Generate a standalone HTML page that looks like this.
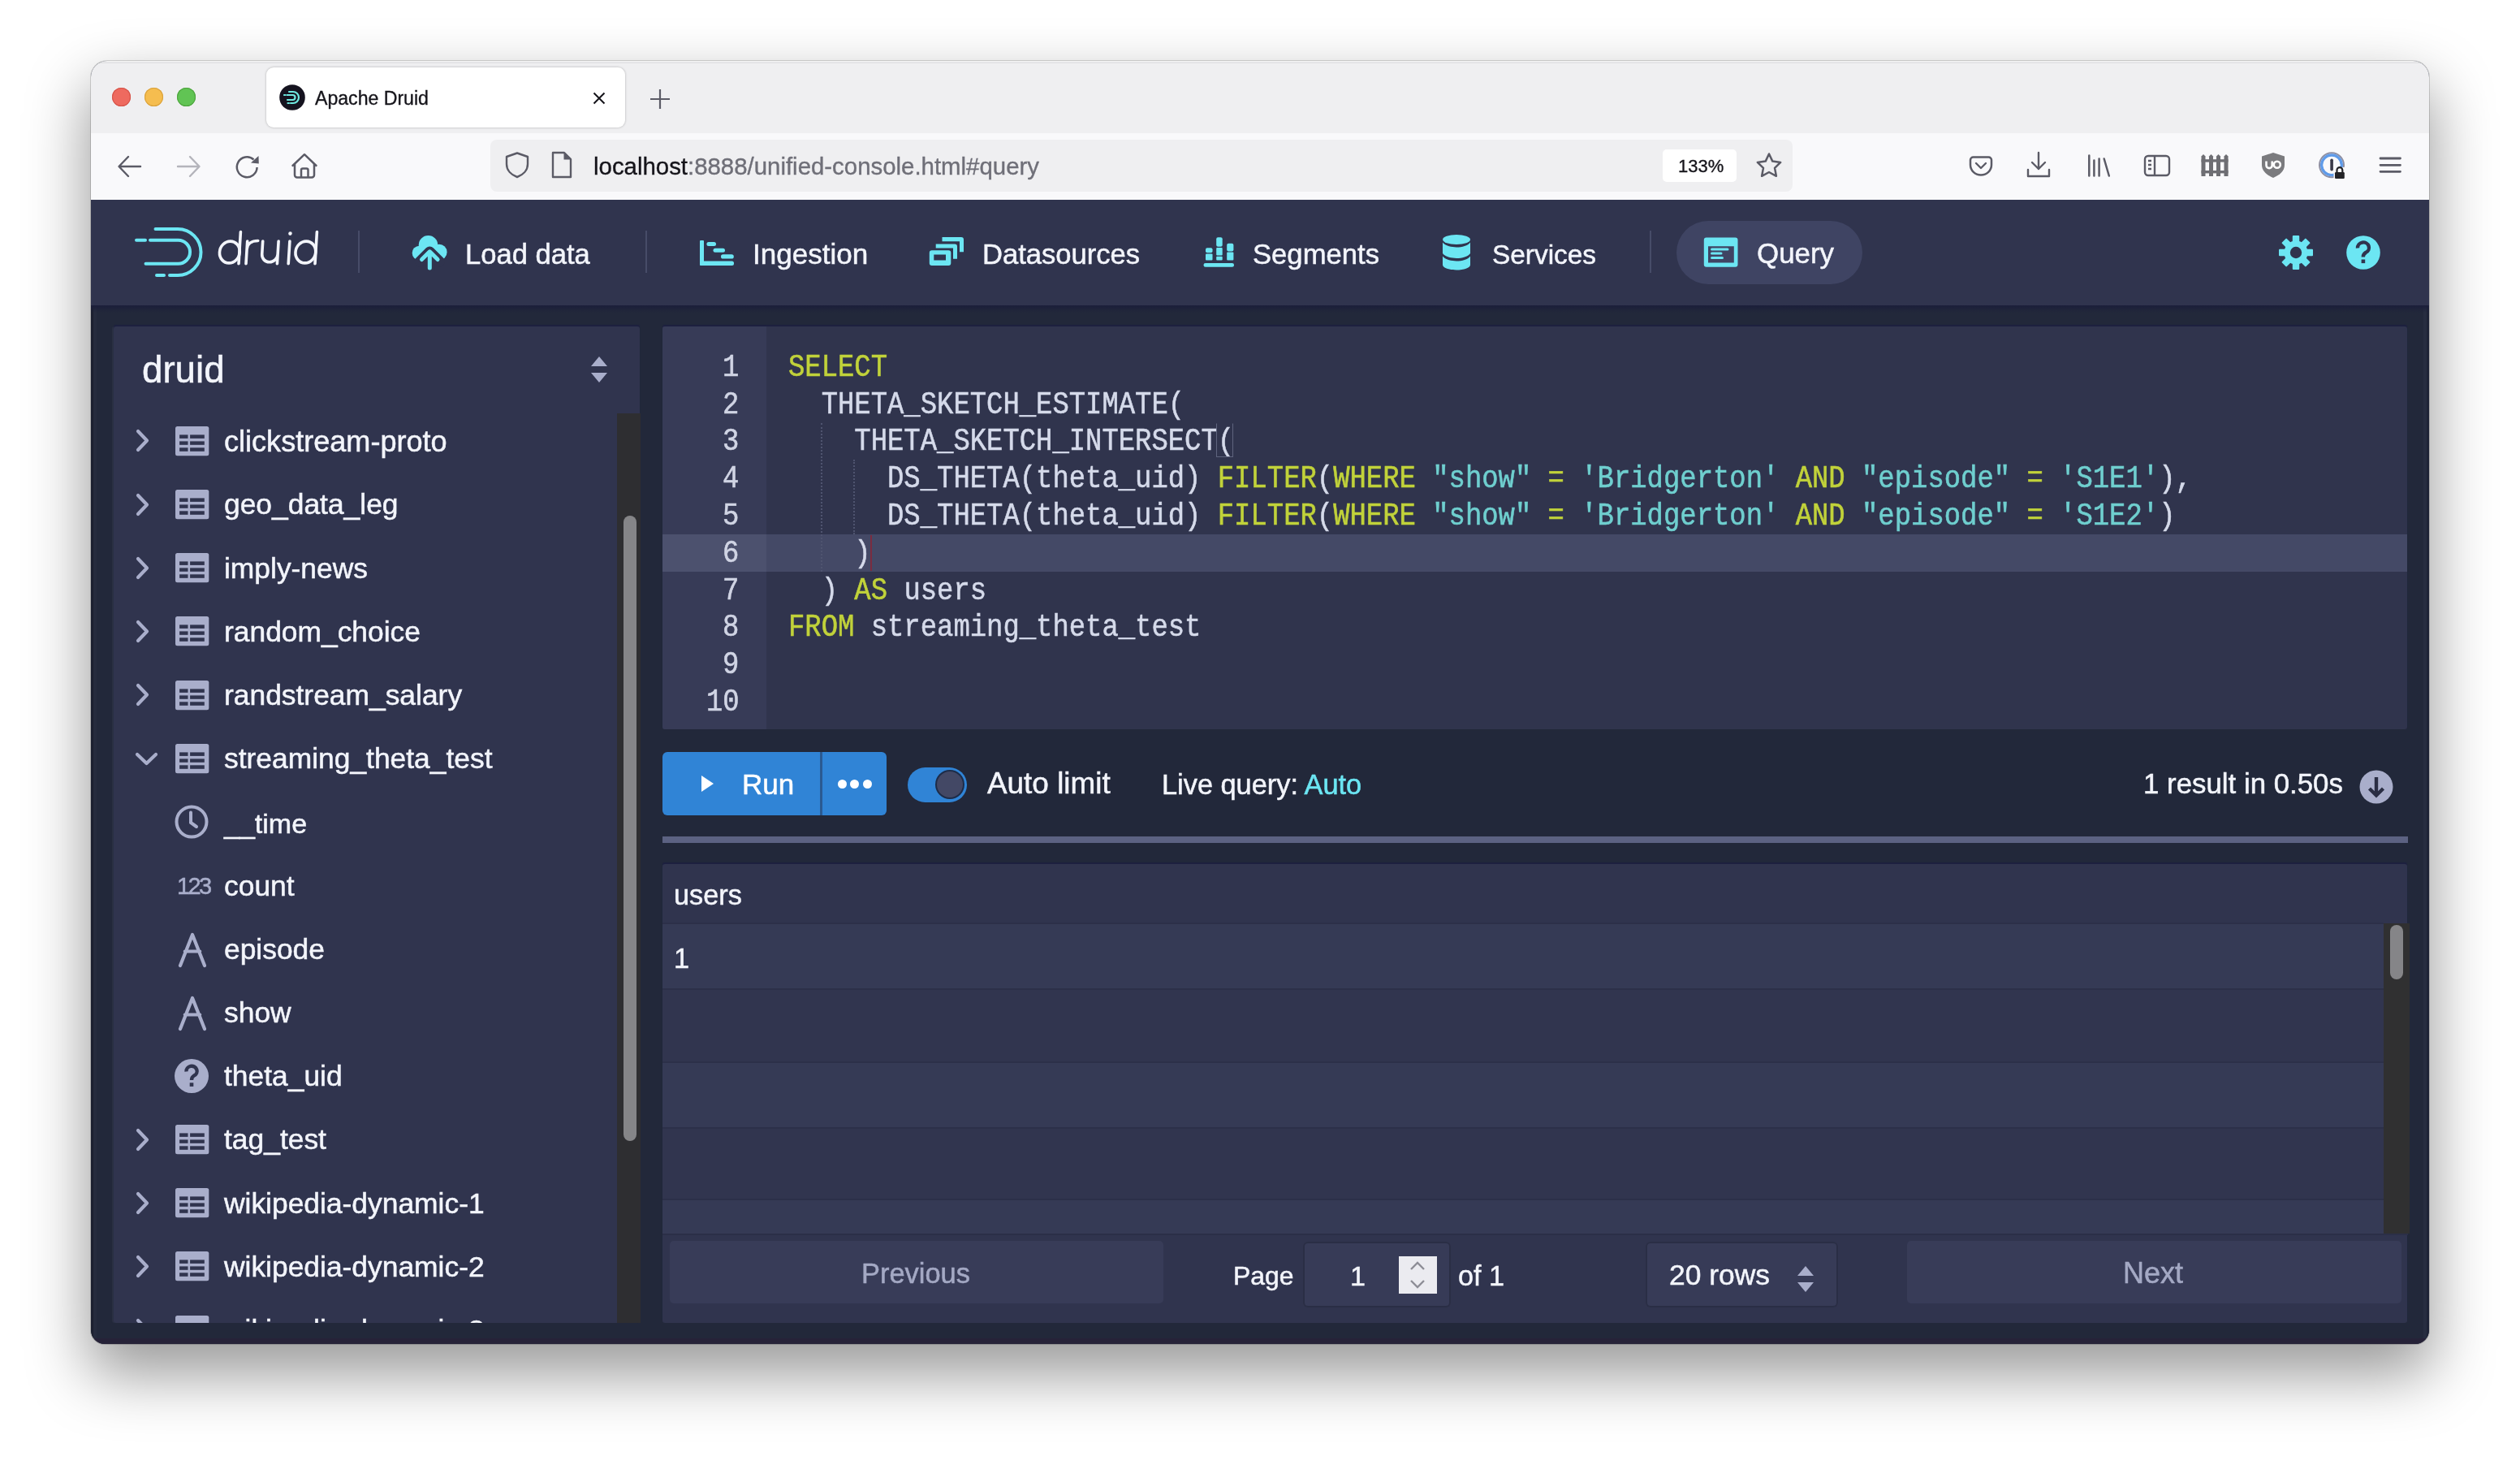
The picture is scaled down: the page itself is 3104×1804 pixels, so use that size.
<!DOCTYPE html>
<html><head><meta charset="utf-8"><style>
html,body{margin:0;padding:0;}
body{width:3104px;height:1804px;position:relative;overflow:hidden;background:#ffffff;font-family:'Liberation Sans', sans-serif;}
.t{position:absolute;white-space:pre;-webkit-text-stroke:0.5px currentColor;will-change:transform;}
.r{position:absolute;}
</style></head><body>
<div class="r" style="left:112px;top:75px;width:2880px;height:1580px;border-radius:20px 20px 17px 17px;box-shadow:0 34px 76px 4px rgba(0,0,0,0.40), 0 0 0 1px rgba(0,0,0,0.15);background:#22283a;"></div><div class="r" style="left:112px;top:75px;width:2880px;height:1580px;border-radius:20px;overflow:hidden;"><div class="r" style="left:0;top:0;width:2880px;height:89px;background:#efeff1;box-shadow:inset 0 1.5px 0 rgba(255,255,255,0.6), inset 0 4px 0 -1px rgba(0,0,0,0.06)"></div><div class="r" style="left:0;top:89px;width:2880px;height:82px;background:#f9f9fb"></div></div><div class="r" style="left:0;top:0;width:3104px;height:1804px;clip-path:inset(75px 112px 149px 112px round 20px 20px 17px 17px)"><div class="r" style="left:112px;top:1648px;width:2880px;height:7px;background:#262238;"></div><div class="r" style="left:112px;top:376px;width:3px;height:1272px;background:#1c2030;"></div><div class="r" style="left:115px;top:376px;width:4px;height:1272px;background:#262b3d;"></div><div class="r" style="left:2985px;top:376px;width:4px;height:1272px;background:#272d40;"></div><div class="r" style="left:2989px;top:376px;width:3px;height:1272px;background:#1e2336;"></div><div class="r" style="left:138.0px;top:108.3px;width:23px;height:23px;border-radius:50%;background:#ee6a5f;box-shadow:inset 0 0 0 1px #d5544a"></div><div class="r" style="left:178.3px;top:108.3px;width:23px;height:23px;border-radius:50%;background:#f5bd4f;box-shadow:inset 0 0 0 1px #d9a13c"></div><div class="r" style="left:218.1px;top:108.3px;width:23px;height:23px;border-radius:50%;background:#61c454;box-shadow:inset 0 0 0 1px #4ea43f"></div><div class="r" style="left:328px;top:83px;width:442px;height:74px;border-radius:9px;background:#ffffff;box-shadow:0 0 3px rgba(0,0,0,0.28)"></div><svg class="r" style="left:344px;top:104px" width="32" height="32" viewBox="0 0 32 32"><circle cx="16" cy="16" r="15.8" fill="#15131f"/><g fill="none" stroke="#6ee8e0" stroke-width="2.2" stroke-linecap="round"><path d="M12 9 H17 A7 7 0 0 1 17 23 H14"/><path d="M9.5 13 H16.5 A3 3 0 0 1 16.5 19 H10"/><path d="M6 13 H7.5"/><path d="M10.5 23 H12"/></g></svg><div class="t" style="left:388.0px;top:110.4px;font-size:23.1px;line-height:23.1px;color:#15141a;font-family:'Liberation Sans', sans-serif;-webkit-text-stroke:0.35px currentColor;">Apache Druid</div><svg class="r" style="left:730px;top:113px" width="16" height="16" viewBox="0 0 16 16"><path d="M1.5 1.5 L14.5 14.5 M14.5 1.5 L1.5 14.5" stroke="#15141a" stroke-width="2" fill="none"/></svg><svg class="r" style="left:800px;top:109px" width="26" height="26" viewBox="0 0 26 26"><path d="M13 1 V25 M1 13 H25" stroke="#5b5b66" stroke-width="2.2" fill="none"/></svg><svg class="r" style="left:144px;top:190px" width="32" height="30" viewBox="0 0 32 30"><path d="M29 15 H3 M14 3 L2.5 15 L14 27" stroke="#5b5b66" stroke-width="2.4" fill="none" stroke-linejoin="round" stroke-linecap="round"/></svg><svg class="r" style="left:216px;top:190px" width="32" height="30" viewBox="0 0 32 30"><path d="M3 15 H29 M18 3 L29.5 15 L18 27" stroke="#b4b4bb" stroke-width="2.4" fill="none" stroke-linejoin="round" stroke-linecap="round"/></svg><svg class="r" style="left:288px;top:188px" width="34" height="34" viewBox="0 0 34 34"><path d="M28.6 18 A12.4 12.4 0 1 1 24.5 8.5" stroke="#5b5b66" stroke-width="2.5" fill="none"/><path d="M30.5 4 L21 12.5 L30.8 13.5 Z" fill="#5b5b66"/></svg><svg class="r" style="left:358px;top:188px" width="34" height="34" viewBox="0 0 34 34"><path d="M2.5 16 L17 2.2 L31.5 16" stroke="#5b5b66" stroke-width="2.5" fill="none" stroke-linejoin="round" stroke-linecap="round"/><path d="M5 14 V27.5 A3 3 0 0 0 8 30.5 H26 A3 3 0 0 0 29 27.5 V14" stroke="#5b5b66" stroke-width="2.5" fill="none"/><path d="M13 30.5 V21.5 A2 2 0 0 1 15 19.5 H19.5 A2 2 0 0 1 21.5 21.5 V30.5" stroke="#5b5b66" stroke-width="2.5" fill="none"/></svg><div class="r" style="left:604px;top:172px;width:1604px;height:64px;border-radius:8px;background:#efeff1"></div><svg class="r" style="left:620px;top:186px" width="34" height="34" viewBox="0 0 34 34"><path d="M17 2.5 L30 7 V16 C30 24 24 29.5 17 32 C10 29.5 4 24 4 16 V7 Z" stroke="#5b5b66" stroke-width="2.4" fill="none" stroke-linejoin="round"/></svg><svg class="r" style="left:678px;top:186px" width="28" height="34" viewBox="0 0 28 34"><path d="M3 2 H17 L25 10 V32 H3 Z" stroke="#5b5b66" stroke-width="2.4" fill="none" stroke-linejoin="round"/><path d="M16.5 2 V10.5 H25 Z" fill="#5b5b66"/></svg><div class="t" style="left:731.0px;top:189.8px;font-size:29.4px;line-height:29.4px;color:#15141a;font-family:'Liberation Sans', sans-serif;-webkit-text-stroke:0.35px currentColor;">localhost<span style="color:#6f6f78">:8888/unified-console.html#query</span></div><div class="r" style="left:2048px;top:184px;width:91px;height:40px;border-radius:5px;background:#ffffff"></div><div class="t" style="left:2067.0px;top:194.3px;font-size:22px;line-height:22px;color:#15141a;font-family:'Liberation Sans', sans-serif;-webkit-text-stroke:0.35px currentColor;">133%</div><svg class="r" style="left:2160px;top:186px" width="38" height="38" viewBox="0 0 38 38"><path d="M19 3.5 L23.3 12.6 L33.2 13.9 L26 20.8 L27.9 30.8 L19 26 L10.1 30.8 L12 20.8 L4.8 13.9 L14.7 12.6 Z" stroke="#5b5b66" stroke-width="2.5" fill="none" stroke-linejoin="round"/></svg><svg class="r" style="left:2424px;top:188px" width="32" height="32" viewBox="0 0 32 32"><path d="M7 5.5 H25.5 A3.5 3.5 0 0 1 29 9 V15 A13 12.5 0 0 1 3 15 V9 A3.5 3.5 0 0 1 6.5 5.5 Z" stroke="#5b5b66" stroke-width="2.5" fill="none" stroke-linejoin="round"/><path d="M10 13 L16 19 L22 13" stroke="#5b5b66" stroke-width="2.4" fill="none" stroke-linecap="round" stroke-linejoin="round"/></svg><svg class="r" style="left:2495px;top:186px" width="32" height="34" viewBox="0 0 32 34"><path d="M16 2 V22 M8 14 L16 22 L24 14 M3 23 V31 H29 V23" stroke="#5b5b66" stroke-width="2.4" fill="none" stroke-linejoin="round" stroke-linecap="round"/></svg><svg class="r" style="left:2568px;top:188px" width="34" height="32" viewBox="0 0 34 32"><path d="M5.3 3.5 V28.5 M11.4 9.5 V28.5 M17.6 7.5 V28.5 M23.7 7.5 L29.8 28.5" stroke="#5b5b66" stroke-width="2.5" fill="none" stroke-linecap="round"/></svg><svg class="r" style="left:2640px;top:188px" width="34" height="32" viewBox="0 0 34 32"><rect x="2" y="4" width="30" height="24" rx="4" stroke="#5b5b66" stroke-width="2.4" fill="none"/><path d="M14 4 V28 M6 10 H10 M6 15 H10 M6 20 H10" stroke="#5b5b66" stroke-width="2.4" fill="none"/></svg><svg class="r" style="left:2708px;top:186px" width="40" height="36" viewBox="0 0 40 36"><g fill="#6e6e73"><path d="M3.5 6.5 L6 4 L8.5 6.5 V31 H3.5 Z"/><path d="M13 6.5 L15.5 4 L18 6.5 V31 H13 Z"/><path d="M22 6.5 L24.5 4 L27 6.5 V31 H22 Z"/><path d="M31.5 6.5 L34 4 L36.5 6.5 V31 H31.5 Z"/><rect x="3.5" y="10.2" width="33" height="3.4"/><rect x="3.5" y="24" width="33" height="3.4"/></g></svg><svg class="r" style="left:2784px;top:186px" width="32" height="34" viewBox="0 0 32 34"><path d="M16 2 L30 6.5 V17 C30 24.5 24 29.5 16 33 C8 29.5 2 24.5 2 17 V6.5 Z" fill="#7b7b7e"/><path d="M7.5 12.5 V17.5 A3.6 3.6 0 0 0 14.7 17.5 V12.5" stroke="#fff" stroke-width="2.6" fill="none"/><circle cx="20.8" cy="16.8" r="4" stroke="#fff" stroke-width="2.6" fill="none"/><circle cx="20.8" cy="16.8" r="1.3" fill="#7b7b7e"/></svg><svg class="r" style="left:2855px;top:185px" width="40" height="40" viewBox="0 0 40 40"><circle cx="17" cy="18.3" r="15" stroke="#8e8fa3" stroke-width="2" fill="none"/><circle cx="17" cy="18.3" r="12.3" stroke="#5f9be9" stroke-width="3.4" fill="none"/><circle cx="17" cy="18.3" r="10.4" fill="#f9f9fb"/><rect x="15.3" y="10.5" width="3.6" height="15" rx="1.8" fill="#3a3a48"/><rect x="19.5" y="21" width="14.5" height="15" rx="1.5" fill="#f9f9fb"/><rect x="21" y="27" width="11.8" height="8" rx="1.2" fill="#232326"/><path d="M23.5 27 V24.5 A3.4 3.4 0 0 1 30.3 24.5 V27" stroke="#232326" stroke-width="2.2" fill="none"/></svg><svg class="r" style="left:2928px;top:190px" width="34" height="28" viewBox="0 0 34 28"><path d="M4 5 H28.5 M4 13.3 H28.5 M4 21.3 H28.5" stroke="#5b5b66" stroke-width="2.8" fill="none" stroke-linecap="round"/></svg><div class="r" style="left:112px;top:246px;width:2880px;height:130px;background:#30344e;"></div><div class="r" style="left:112px;top:376px;width:2880px;height:9px;background:linear-gradient(#1b1e3a,rgba(34,40,58,0))"></div><svg class="r" style="left:160px;top:270px" width="100" height="80" viewBox="0 0 100 80"><g fill="none" stroke="#6ce6f3" stroke-width="4" stroke-linecap="round"><path d="M31.5 12 H59 A28.5 28.5 0 0 1 59 69 H49"/><path d="M33 69 H42"/><path d="M25 25.7 H59.5 A14.5 14.5 0 0 1 59.5 54.8 H19.5"/><path d="M8 25.7 H19"/></g></svg><svg class="r" style="left:262px;top:280px" width="132" height="50" viewBox="0 0 132 50"><g transform="translate(0 44.8) skewX(-3.5) translate(0 -44.8)"><g fill="none" stroke="#f3f5fb" stroke-width="3.6" stroke-linecap="round"><ellipse cx="20" cy="30.5" rx="12.4" ry="13.4"/><path d="M32 5.5 V44.8"/><path d="M41 17 V44.8 M41 27 C41 20 46 16.5 54 16.5"/><path d="M60 17 V33 A9.7 9.7 0 0 0 79.4 33 M79.4 17 V44.8"/><path d="M93.2 17 V44.8"/><ellipse cx="113.5" cy="30.5" rx="12.4" ry="13.4"/><path d="M126 5.5 V44.8"/></g><circle cx="93.2" cy="7.6" r="2.3" fill="#f3f5fb"/></g></svg><div class="r" style="left:441px;top:284px;width:2px;height:52px;background:#474c68;"></div><div class="r" style="left:795px;top:284px;width:2px;height:52px;background:#474c68;"></div><div class="r" style="left:2032px;top:284px;width:2px;height:52px;background:#474c68;"></div><svg class="r" style="left:506px;top:288px" width="46" height="46" viewBox="0 0 46 46"><g fill="#6ce6f3"><circle cx="10.5" cy="23.5" r="8.8"/><circle cx="21.5" cy="13.8" r="11.8"/><circle cx="34.8" cy="22.5" r="9.8"/><rect x="10.5" y="14" width="24.3" height="18.3"/></g><path d="M11 34 L23.3 21.8 L35.6 34 M23.3 23 V45" stroke="#30344e" stroke-width="12.5" fill="none" stroke-linejoin="round" stroke-linecap="round"/><path d="M13.5 31.5 L23.3 21.8 L33.1 31.5 M23.3 23 V42" stroke="#6ce6f3" stroke-width="5" fill="none" stroke-linecap="round" stroke-linejoin="round"/></svg><div class="t" style="left:573.0px;top:295.6px;font-size:34.6px;line-height:34.6px;color:#f3f5fb;font-family:'Liberation Sans', sans-serif;">Load data</div><svg class="r" style="left:860px;top:294px" width="46" height="36" viewBox="0 0 46 36"><g fill="#6ce6f3"><rect x="2" y="2" width="5" height="31" rx="1"/><rect x="2" y="27.5" width="42" height="5.5" rx="2.5"/><rect x="10.4" y="4" width="11.6" height="5" rx="2.5"/><rect x="18.5" y="11.8" width="14.5" height="5" rx="2.5"/><rect x="28" y="19.3" width="15.8" height="5.3" rx="2.6"/></g></svg><div class="t" style="left:927.0px;top:295.2px;font-size:35.1px;line-height:35.1px;color:#f3f5fb;font-family:'Liberation Sans', sans-serif;">Ingestion</div><svg class="r" style="left:1142px;top:290px" width="48" height="40" viewBox="0 0 48 40"><g fill="#6ce6f3"><path d="M18.5 2 H42 A3 3 0 0 1 45 5 V20.3 H40 V7.3 H18.5 Z"/><path d="M10.7 10.4 H34 A3 3 0 0 1 37 13.4 V28.8 H32 V15.5 H10.7 Z"/><path fill-rule="evenodd" d="M5.8 18.3 H26.3 A3 3 0 0 1 29.3 21.3 V34 A3 3 0 0 1 26.3 37 H5.8 A3 3 0 0 1 2.8 34 V21.3 A3 3 0 0 1 5.8 18.3 Z M8.3 23.4 V30.5 H23 V23.4 Z"/></g></svg><div class="t" style="left:1210.0px;top:295.6px;font-size:34.6px;line-height:34.6px;color:#f3f5fb;font-family:'Liberation Sans', sans-serif;">Datasources</div><svg class="r" style="left:1480px;top:290px" width="44" height="42" viewBox="0 0 44 42"><g fill="#6ce6f3"><rect x="5" y="15.2" width="8.5" height="6" rx="2"/><rect x="5" y="22.5" width="8.5" height="8" rx="1"/><rect x="18.2" y="2.2" width="7.5" height="11.6" rx="2"/><rect x="18.2" y="15" width="7.5" height="9.6" rx="1"/><rect x="18.2" y="25.8" width="7.5" height="4.7" rx="1"/><rect x="31.2" y="9.7" width="8.2" height="9.7" rx="2"/><rect x="31.2" y="20.6" width="8.2" height="9.9" rx="1"/><rect x="2.5" y="34" width="37.5" height="4.7" rx="2.3"/></g></svg><div class="t" style="left:1543.0px;top:295.5px;font-size:34.65px;line-height:34.65px;color:#f3f5fb;font-family:'Liberation Sans', sans-serif;">Segments</div><svg class="r" style="left:1775px;top:287px" width="40" height="48" viewBox="0 0 40 48"><g fill="#6ce6f3"><ellipse cx="19" cy="8" rx="17" ry="6"/><path d="M2 11.5 C5 15.5 12 17.5 19 17.5 C26 17.5 33 15.5 36 11.5 V25 C33 29 26 31 19 31 C12 31 5 29 2 25 Z"/><path d="M2 28.5 C5 32.5 12 34.5 19 34.5 C26 34.5 33 32.5 36 28.5 V39 C36 43 28 45.5 19 45.5 C10 45.5 2 43 2 39 Z"/></g></svg><div class="t" style="left:1838.0px;top:296.6px;font-size:33.4px;line-height:33.4px;color:#f3f5fb;font-family:'Liberation Sans', sans-serif;">Services</div><div class="r" style="left:2065px;top:272px;width:229px;height:78px;border-radius:39px;background:#3f4463"></div><svg class="r" style="left:2096px;top:290px" width="48" height="42" viewBox="0 0 48 42"><path fill-rule="evenodd" fill="#6ce6f3" d="M5.8 2.6 H41.5 A3 3 0 0 1 44.5 5.6 V35.8 A3 3 0 0 1 41.5 38.8 H5.8 A3 3 0 0 1 2.8 35.8 V5.6 A3 3 0 0 1 5.8 2.6 Z M8 13.3 V33.6 H39.8 V13.3 Z"/><g stroke="#6ce6f3" stroke-width="3" stroke-linecap="round"><path d="M12.5 17 H32"/><path d="M12.5 22 H24"/><path d="M12.5 27.4 H25.5"/></g></svg><div class="t" style="left:2164.0px;top:295.3px;font-size:34.9px;line-height:34.9px;color:#f3f5fb;font-family:'Liberation Sans', sans-serif;">Query</div><svg class="r" style="left:2806px;top:289px" width="44" height="44" viewBox="0 0 44 44"><g transform="translate(22 22)" fill="#6ce6f3"><rect x="-4.2" y="-21" width="8.4" height="10" rx="1" transform="rotate(0)"/><rect x="-4.2" y="-21" width="8.4" height="10" rx="1" transform="rotate(45)"/><rect x="-4.2" y="-21" width="8.4" height="10" rx="1" transform="rotate(90)"/><rect x="-4.2" y="-21" width="8.4" height="10" rx="1" transform="rotate(135)"/><rect x="-4.2" y="-21" width="8.4" height="10" rx="1" transform="rotate(180)"/><rect x="-4.2" y="-21" width="8.4" height="10" rx="1" transform="rotate(225)"/><rect x="-4.2" y="-21" width="8.4" height="10" rx="1" transform="rotate(270)"/><rect x="-4.2" y="-21" width="8.4" height="10" rx="1" transform="rotate(315)"/><circle r="14.5"/></g><circle cx="22" cy="22" r="7.2" fill="#30344e"/></svg><svg class="r" style="left:2889px;top:289px" width="44" height="44" viewBox="0 0 44 44"><circle cx="22" cy="22" r="20.8" fill="#6ce6f3"/><path d="M15 16.5 A7 6.6 0 1 1 25 22 C22.5 23.5 21.8 25 21.8 27.5" stroke="#30344e" stroke-width="4.4" fill="none"/><rect x="19.6" y="30.5" width="4.6" height="4.6" fill="#30344e"/></svg><div class="r" style="left:140px;top:402px;width:648px;height:1227px;border-radius:3px;background:#30344e;box-shadow:0 -2px 1px #1d2040, -2px 0 1px #2c3144;overflow:hidden"></div><div class="t" style="left:175.0px;top:432.6px;font-size:45.7px;line-height:45.7px;color:#f3f5fb;font-family:'Liberation Sans', sans-serif;">druid</div><svg class="r" style="left:726px;top:437px" width="24" height="36" viewBox="0 0 24 36"><path d="M12 2 L22 14 H2 Z M12 34 L22 22 H2 Z" fill="#a9aecb"/></svg><div class="r" style="left:760px;top:509px;width:29px;height:1120px;background:#2e2e31;"></div><div class="r" style="left:768px;top:635px;width:16px;height:770px;border-radius:8px;background:#858588"></div><div class="r" style="left:0;top:0;width:3104px;height:1804px;clip-path:inset(402px 2316px 175px 140px)"><svg class="r" style="left:167px;top:528.4px" width="18" height="30" viewBox="0 0 18 30"><path d="M3 3 L14 14.5 L3 26" stroke="#a9aecb" stroke-width="4.2" fill="none" stroke-linecap="round" stroke-linejoin="round"/></svg><svg class="r" style="left:216px;top:524.8px" width="42" height="37" viewBox="0 0 42 37"><g fill="#a9aecb"><rect x="0" y="0" width="41.3" height="36.2" rx="2.5"/></g><g fill="#30344e"><rect x="5.1" y="10.4" width="10.4" height="4.5"/><rect x="18.1" y="10.4" width="17.7" height="4.5"/><rect x="5.1" y="18.4" width="10.4" height="4.4"/><rect x="18.1" y="18.4" width="17.7" height="4.4"/><rect x="5.1" y="26.3" width="10.4" height="4.5"/><rect x="18.1" y="26.3" width="17.7" height="4.5"/></g></svg><div class="t" style="left:276.0px;top:525.5px;font-size:36.1px;line-height:36.1px;color:#f3f5fb;font-family:'Liberation Sans', sans-serif;">clickstream-proto</div><svg class="r" style="left:167px;top:606.6px" width="18" height="30" viewBox="0 0 18 30"><path d="M3 3 L14 14.5 L3 26" stroke="#a9aecb" stroke-width="4.2" fill="none" stroke-linecap="round" stroke-linejoin="round"/></svg><svg class="r" style="left:216px;top:603.0px" width="42" height="37" viewBox="0 0 42 37"><g fill="#a9aecb"><rect x="0" y="0" width="41.3" height="36.2" rx="2.5"/></g><g fill="#30344e"><rect x="5.1" y="10.4" width="10.4" height="4.5"/><rect x="18.1" y="10.4" width="17.7" height="4.5"/><rect x="5.1" y="18.4" width="10.4" height="4.4"/><rect x="18.1" y="18.4" width="17.7" height="4.4"/><rect x="5.1" y="26.3" width="10.4" height="4.5"/><rect x="18.1" y="26.3" width="17.7" height="4.5"/></g></svg><div class="t" style="left:276.0px;top:604.3px;font-size:35.4px;line-height:35.4px;color:#f3f5fb;font-family:'Liberation Sans', sans-serif;">geo_data_leg</div><svg class="r" style="left:167px;top:684.8px" width="18" height="30" viewBox="0 0 18 30"><path d="M3 3 L14 14.5 L3 26" stroke="#a9aecb" stroke-width="4.2" fill="none" stroke-linecap="round" stroke-linejoin="round"/></svg><svg class="r" style="left:216px;top:681.1999999999999px" width="42" height="37" viewBox="0 0 42 37"><g fill="#a9aecb"><rect x="0" y="0" width="41.3" height="36.2" rx="2.5"/></g><g fill="#30344e"><rect x="5.1" y="10.4" width="10.4" height="4.5"/><rect x="18.1" y="10.4" width="17.7" height="4.5"/><rect x="5.1" y="18.4" width="10.4" height="4.4"/><rect x="18.1" y="18.4" width="17.7" height="4.4"/><rect x="5.1" y="26.3" width="10.4" height="4.5"/><rect x="18.1" y="26.3" width="17.7" height="4.5"/></g></svg><div class="t" style="left:276.0px;top:682.5px;font-size:35.4px;line-height:35.4px;color:#f3f5fb;font-family:'Liberation Sans', sans-serif;">imply-news</div><svg class="r" style="left:167px;top:763.0px" width="18" height="30" viewBox="0 0 18 30"><path d="M3 3 L14 14.5 L3 26" stroke="#a9aecb" stroke-width="4.2" fill="none" stroke-linecap="round" stroke-linejoin="round"/></svg><svg class="r" style="left:216px;top:759.4px" width="42" height="37" viewBox="0 0 42 37"><g fill="#a9aecb"><rect x="0" y="0" width="41.3" height="36.2" rx="2.5"/></g><g fill="#30344e"><rect x="5.1" y="10.4" width="10.4" height="4.5"/><rect x="18.1" y="10.4" width="17.7" height="4.5"/><rect x="5.1" y="18.4" width="10.4" height="4.4"/><rect x="18.1" y="18.4" width="17.7" height="4.4"/><rect x="5.1" y="26.3" width="10.4" height="4.5"/><rect x="18.1" y="26.3" width="17.7" height="4.5"/></g></svg><div class="t" style="left:276.0px;top:760.7px;font-size:35.4px;line-height:35.4px;color:#f3f5fb;font-family:'Liberation Sans', sans-serif;">random_choice</div><svg class="r" style="left:167px;top:841.2px" width="18" height="30" viewBox="0 0 18 30"><path d="M3 3 L14 14.5 L3 26" stroke="#a9aecb" stroke-width="4.2" fill="none" stroke-linecap="round" stroke-linejoin="round"/></svg><svg class="r" style="left:216px;top:837.6px" width="42" height="37" viewBox="0 0 42 37"><g fill="#a9aecb"><rect x="0" y="0" width="41.3" height="36.2" rx="2.5"/></g><g fill="#30344e"><rect x="5.1" y="10.4" width="10.4" height="4.5"/><rect x="18.1" y="10.4" width="17.7" height="4.5"/><rect x="5.1" y="18.4" width="10.4" height="4.4"/><rect x="18.1" y="18.4" width="17.7" height="4.4"/><rect x="5.1" y="26.3" width="10.4" height="4.5"/><rect x="18.1" y="26.3" width="17.7" height="4.5"/></g></svg><div class="t" style="left:276.0px;top:838.9px;font-size:35.4px;line-height:35.4px;color:#f3f5fb;font-family:'Liberation Sans', sans-serif;">randstream_salary</div><svg class="r" style="left:166px;top:925.9px" width="30" height="18" viewBox="0 0 30 18"><path d="M3 3 L14.5 14 L26 3" stroke="#a9aecb" stroke-width="4.2" fill="none" stroke-linecap="round" stroke-linejoin="round"/></svg><svg class="r" style="left:216px;top:915.8px" width="42" height="37" viewBox="0 0 42 37"><g fill="#a9aecb"><rect x="0" y="0" width="41.3" height="36.2" rx="2.5"/></g><g fill="#30344e"><rect x="5.1" y="10.4" width="10.4" height="4.5"/><rect x="18.1" y="10.4" width="17.7" height="4.5"/><rect x="5.1" y="18.4" width="10.4" height="4.4"/><rect x="18.1" y="18.4" width="17.7" height="4.4"/><rect x="5.1" y="26.3" width="10.4" height="4.5"/><rect x="18.1" y="26.3" width="17.7" height="4.5"/></g></svg><div class="t" style="left:276.0px;top:917.1px;font-size:35.4px;line-height:35.4px;color:#f3f5fb;font-family:'Liberation Sans', sans-serif;">streaming_theta_test</div><svg class="r" style="left:215px;top:991.1px" width="42" height="42" viewBox="0 0 42 42"><circle cx="21" cy="21" r="18.5" stroke="#a9aecb" stroke-width="4" fill="none"/><path d="M20 9.5 V22 L27 27" stroke="#a9aecb" stroke-width="4" fill="none" stroke-linecap="round"/></svg><div class="t" style="left:276.0px;top:996.5px;font-size:34.0px;line-height:34.0px;color:#f3f5fb;font-family:'Liberation Sans', sans-serif;">__time</div><div class="t" style="left:217.5px;top:1077.1px;font-size:29px;line-height:29px;color:#a9aecb;font-family:'Liberation Sans', sans-serif;letter-spacing:-2.6px">123</div><div class="t" style="left:276.0px;top:1073.5px;font-size:35.4px;line-height:35.4px;color:#f3f5fb;font-family:'Liberation Sans', sans-serif;">count</div><svg class="r" style="left:218px;top:1147.5px" width="36" height="44" viewBox="0 0 36 44"><path d="M4 41 L19 3 L34 41 M9.8 23.5 H28.2" stroke="#a9aecb" stroke-width="4.2" fill="none" stroke-linecap="round" stroke-linejoin="round"/></svg><div class="t" style="left:276.0px;top:1151.7px;font-size:35.4px;line-height:35.4px;color:#f3f5fb;font-family:'Liberation Sans', sans-serif;">episode</div><svg class="r" style="left:218px;top:1225.7px" width="36" height="44" viewBox="0 0 36 44"><path d="M4 41 L19 3 L34 41 M9.8 23.5 H28.2" stroke="#a9aecb" stroke-width="4.2" fill="none" stroke-linecap="round" stroke-linejoin="round"/></svg><div class="t" style="left:276.0px;top:1229.9px;font-size:35.4px;line-height:35.4px;color:#f3f5fb;font-family:'Liberation Sans', sans-serif;">show</div><svg class="r" style="left:215px;top:1303.9px" width="42" height="42" viewBox="0 0 42 42"><circle cx="21" cy="21" r="21" fill="#a9aecb"/><path d="M14.5 15.5 A6.6 6.2 0 1 1 24 20.5 C21.6 22 21 23.5 21 26" stroke="#30344e" stroke-width="4.4" fill="none"/><rect x="18.7" y="29.3" width="4.6" height="4.6" fill="#30344e"/></svg><div class="t" style="left:276.0px;top:1308.1px;font-size:35.4px;line-height:35.4px;color:#f3f5fb;font-family:'Liberation Sans', sans-serif;">theta_uid</div><svg class="r" style="left:167px;top:1388.6px" width="18" height="30" viewBox="0 0 18 30"><path d="M3 3 L14 14.5 L3 26" stroke="#a9aecb" stroke-width="4.2" fill="none" stroke-linecap="round" stroke-linejoin="round"/></svg><svg class="r" style="left:216px;top:1385.0px" width="42" height="37" viewBox="0 0 42 37"><g fill="#a9aecb"><rect x="0" y="0" width="41.3" height="36.2" rx="2.5"/></g><g fill="#30344e"><rect x="5.1" y="10.4" width="10.4" height="4.5"/><rect x="18.1" y="10.4" width="17.7" height="4.5"/><rect x="5.1" y="18.4" width="10.4" height="4.4"/><rect x="18.1" y="18.4" width="17.7" height="4.4"/><rect x="5.1" y="26.3" width="10.4" height="4.5"/><rect x="18.1" y="26.3" width="17.7" height="4.5"/></g></svg><div class="t" style="left:276.0px;top:1386.3px;font-size:35.4px;line-height:35.4px;color:#f3f5fb;font-family:'Liberation Sans', sans-serif;">tag_test</div><svg class="r" style="left:167px;top:1466.8000000000002px" width="18" height="30" viewBox="0 0 18 30"><path d="M3 3 L14 14.5 L3 26" stroke="#a9aecb" stroke-width="4.2" fill="none" stroke-linecap="round" stroke-linejoin="round"/></svg><svg class="r" style="left:216px;top:1463.2000000000003px" width="42" height="37" viewBox="0 0 42 37"><g fill="#a9aecb"><rect x="0" y="0" width="41.3" height="36.2" rx="2.5"/></g><g fill="#30344e"><rect x="5.1" y="10.4" width="10.4" height="4.5"/><rect x="18.1" y="10.4" width="17.7" height="4.5"/><rect x="5.1" y="18.4" width="10.4" height="4.4"/><rect x="18.1" y="18.4" width="17.7" height="4.4"/><rect x="5.1" y="26.3" width="10.4" height="4.5"/><rect x="18.1" y="26.3" width="17.7" height="4.5"/></g></svg><div class="t" style="left:276.0px;top:1464.5px;font-size:35.4px;line-height:35.4px;color:#f3f5fb;font-family:'Liberation Sans', sans-serif;">wikipedia-dynamic-1</div><svg class="r" style="left:167px;top:1545.0px" width="18" height="30" viewBox="0 0 18 30"><path d="M3 3 L14 14.5 L3 26" stroke="#a9aecb" stroke-width="4.2" fill="none" stroke-linecap="round" stroke-linejoin="round"/></svg><svg class="r" style="left:216px;top:1541.4px" width="42" height="37" viewBox="0 0 42 37"><g fill="#a9aecb"><rect x="0" y="0" width="41.3" height="36.2" rx="2.5"/></g><g fill="#30344e"><rect x="5.1" y="10.4" width="10.4" height="4.5"/><rect x="18.1" y="10.4" width="17.7" height="4.5"/><rect x="5.1" y="18.4" width="10.4" height="4.4"/><rect x="18.1" y="18.4" width="17.7" height="4.4"/><rect x="5.1" y="26.3" width="10.4" height="4.5"/><rect x="18.1" y="26.3" width="17.7" height="4.5"/></g></svg><div class="t" style="left:276.0px;top:1542.7px;font-size:35.4px;line-height:35.4px;color:#f3f5fb;font-family:'Liberation Sans', sans-serif;">wikipedia-dynamic-2</div><svg class="r" style="left:167px;top:1623.1999999999998px" width="18" height="30" viewBox="0 0 18 30"><path d="M3 3 L14 14.5 L3 26" stroke="#a9aecb" stroke-width="4.2" fill="none" stroke-linecap="round" stroke-linejoin="round"/></svg><svg class="r" style="left:216px;top:1619.6px" width="42" height="37" viewBox="0 0 42 37"><g fill="#a9aecb"><rect x="0" y="0" width="41.3" height="36.2" rx="2.5"/></g><g fill="#30344e"><rect x="5.1" y="10.4" width="10.4" height="4.5"/><rect x="18.1" y="10.4" width="17.7" height="4.5"/><rect x="5.1" y="18.4" width="10.4" height="4.4"/><rect x="18.1" y="18.4" width="17.7" height="4.4"/><rect x="5.1" y="26.3" width="10.4" height="4.5"/><rect x="18.1" y="26.3" width="17.7" height="4.5"/></g></svg><div class="t" style="left:276.0px;top:1620.9px;font-size:35.4px;line-height:35.4px;color:#f3f5fb;font-family:'Liberation Sans', sans-serif;">wikipedia-dynamic-3</div></div><div class="r" style="left:816px;top:402px;width:2149px;height:496px;border-radius:3px;background:#30344d;box-shadow:0 -2px 1px #1d2040;overflow:hidden"><div class="r" style="left:0;top:0;width:128px;height:496px;background:#373b57"></div><div class="r" style="left:0;top:256px;width:2149px;height:46px;background:#444966"></div><div class="r" style="left:0;top:256px;width:128px;height:46px;background:#4c516e"></div></div><div class="t" style="left:890.1px;top:437.8px;font-size:33.9px;line-height:33.9px;color:#d0d4e4;font-family:'Liberation Mono', monospace;transform:scaleY(1.12);transform-origin:0 25.76px;">1</div><div class="t" style="left:890.1px;top:483.6px;font-size:33.9px;line-height:33.9px;color:#d0d4e4;font-family:'Liberation Mono', monospace;transform:scaleY(1.12);transform-origin:0 25.76px;">2</div><div class="t" style="left:890.1px;top:529.4px;font-size:33.9px;line-height:33.9px;color:#d0d4e4;font-family:'Liberation Mono', monospace;transform:scaleY(1.12);transform-origin:0 25.76px;">3</div><div class="t" style="left:890.1px;top:575.2px;font-size:33.9px;line-height:33.9px;color:#d0d4e4;font-family:'Liberation Mono', monospace;transform:scaleY(1.12);transform-origin:0 25.76px;">4</div><div class="t" style="left:890.1px;top:621.0px;font-size:33.9px;line-height:33.9px;color:#d0d4e4;font-family:'Liberation Mono', monospace;transform:scaleY(1.12);transform-origin:0 25.76px;">5</div><div class="t" style="left:890.1px;top:666.8px;font-size:33.9px;line-height:33.9px;color:#d0d4e4;font-family:'Liberation Mono', monospace;transform:scaleY(1.12);transform-origin:0 25.76px;">6</div><div class="t" style="left:890.1px;top:712.6px;font-size:33.9px;line-height:33.9px;color:#d0d4e4;font-family:'Liberation Mono', monospace;transform:scaleY(1.12);transform-origin:0 25.76px;">7</div><div class="t" style="left:890.1px;top:758.4px;font-size:33.9px;line-height:33.9px;color:#d0d4e4;font-family:'Liberation Mono', monospace;transform:scaleY(1.12);transform-origin:0 25.76px;">8</div><div class="t" style="left:890.1px;top:804.2px;font-size:33.9px;line-height:33.9px;color:#d0d4e4;font-family:'Liberation Mono', monospace;transform:scaleY(1.12);transform-origin:0 25.76px;">9</div><div class="t" style="left:869.8px;top:850.0px;font-size:33.9px;line-height:33.9px;color:#d0d4e4;font-family:'Liberation Mono', monospace;transform:scaleY(1.12);transform-origin:0 25.76px;">10</div><div class="t" style="left:970.5px;top:437.8px;font-size:33.9px;line-height:33.9px;color:#d5daea;font-family:'Liberation Mono', monospace;transform:scaleY(1.12);transform-origin:0 25.76px;"><span style="color:#c1d23a">SELECT</span></div><div class="t" style="left:970.5px;top:483.6px;font-size:33.9px;line-height:33.9px;color:#d5daea;font-family:'Liberation Mono', monospace;transform:scaleY(1.12);transform-origin:0 25.76px;">  THETA_SKETCH_ESTIMATE(</div><div class="t" style="left:970.5px;top:529.4px;font-size:33.9px;line-height:33.9px;color:#d5daea;font-family:'Liberation Mono', monospace;transform:scaleY(1.12);transform-origin:0 25.76px;">    THETA_SKETCH_INTERSECT(</div><div class="t" style="left:970.5px;top:575.2px;font-size:33.9px;line-height:33.9px;color:#d5daea;font-family:'Liberation Mono', monospace;transform:scaleY(1.12);transform-origin:0 25.76px;">      DS_THETA(theta_uid) <span style="color:#c1d23a">FILTER</span>(<span style="color:#c1d23a">WHERE</span> <span style="color:#6fcfcf">"show"</span> <span style="color:#c1d23a">=</span> <span style="color:#6fcfcf">'Bridgerton'</span> <span style="color:#c1d23a">AND</span> <span style="color:#6fcfcf">"episode"</span> <span style="color:#c1d23a">=</span> <span style="color:#6fcfcf">'S1E1'</span>),</div><div class="t" style="left:970.5px;top:621.0px;font-size:33.9px;line-height:33.9px;color:#d5daea;font-family:'Liberation Mono', monospace;transform:scaleY(1.12);transform-origin:0 25.76px;">      DS_THETA(theta_uid) <span style="color:#c1d23a">FILTER</span>(<span style="color:#c1d23a">WHERE</span> <span style="color:#6fcfcf">"show"</span> <span style="color:#c1d23a">=</span> <span style="color:#6fcfcf">'Bridgerton'</span> <span style="color:#c1d23a">AND</span> <span style="color:#6fcfcf">"episode"</span> <span style="color:#c1d23a">=</span> <span style="color:#6fcfcf">'S1E2'</span>)</div><div class="t" style="left:970.5px;top:666.8px;font-size:33.9px;line-height:33.9px;color:#d5daea;font-family:'Liberation Mono', monospace;transform:scaleY(1.12);transform-origin:0 25.76px;">    )</div><div class="t" style="left:970.5px;top:712.6px;font-size:33.9px;line-height:33.9px;color:#d5daea;font-family:'Liberation Mono', monospace;transform:scaleY(1.12);transform-origin:0 25.76px;">  ) <span style="color:#c1d23a">AS</span> users</div><div class="t" style="left:970.5px;top:758.4px;font-size:33.9px;line-height:33.9px;color:#d5daea;font-family:'Liberation Mono', monospace;transform:scaleY(1.12);transform-origin:0 25.76px;"><span style="color:#c1d23a">FROM</span> streaming_theta_test</div><div class="r" style="left:1010.5px;top:520.5px;width:0;height:183.2px;border-left:2px dotted #4f546f"></div><div class="r" style="left:1051.2px;top:566.3px;width:0;height:91.6px;border-left:2px dotted #4f546f"></div><div class="r" style="left:1498px;top:521px;width:19px;height:40px;border:1px solid #5f647e;border-top-color:transparent"></div><div class="r" style="left:1072px;top:659px;width:2px;height:44px;background:#7a2c40;"></div><div class="r" style="left:816px;top:926px;width:276px;height:78px;border-radius:6px;background:#3084d6"></div><div class="r" style="left:1010px;top:926px;width:3px;height:78px;background:#2a5a92;"></div><svg class="r" style="left:862px;top:953px" width="20" height="24" viewBox="0 0 20 24"><path d="M2 2 L17 12 L2 22 Z" fill="#ffffff"/></svg><div class="t" style="left:914.0px;top:948.2px;font-size:35px;line-height:35px;color:#ffffff;font-family:'Liberation Sans', sans-serif;">Run</div><div class="r" style="left:1031.5px;top:959.5px;width:11px;height:11px;border-radius:50%;background:#ffffff"></div><div class="r" style="left:1047.0px;top:959.5px;width:11px;height:11px;border-radius:50%;background:#ffffff"></div><div class="r" style="left:1062.9px;top:959.5px;width:11px;height:11px;border-radius:50%;background:#ffffff"></div><div class="r" style="left:1118px;top:945px;width:73px;height:43px;border-radius:22px;background:#3084d6"></div><div class="r" style="left:1154px;top:949.5px;width:32px;height:32px;border-radius:50%;background:#434865;box-shadow:0 0 0 2px #1e2c48"></div><div class="t" style="left:1216.0px;top:946.6px;font-size:36.9px;line-height:36.9px;color:#f3f5fb;font-family:'Liberation Sans', sans-serif;">Auto limit</div><div class="t" style="left:1431.0px;top:948.8px;font-size:34.34px;line-height:34.34px;color:#f3f5fb;font-family:'Liberation Sans', sans-serif;">Live query: <span style="color:#6ce6f3">Auto</span></div><div class="t" style="left:2640.0px;top:948.4px;font-size:34.85px;line-height:34.85px;color:#f3f5fb;font-family:'Liberation Sans', sans-serif;">1 result in 0.50s</div><svg class="r" style="left:2906px;top:948px" width="42" height="42" viewBox="0 0 42 42"><circle cx="21" cy="21" r="20.5" fill="#a9aecb"/><path d="M21 9 V31 M12.5 23 L21 31.5 L29.5 23" stroke="#2a2e44" stroke-width="4.4" fill="none" stroke-linejoin="miter"/></svg><div class="r" style="left:816px;top:1030px;width:2150px;height:8px;background:#5c6282;"></div><div class="r" style="left:816px;top:1064px;width:2149px;height:565px;border-radius:3px;background:#30344e;box-shadow:0 -2px 1px #1d2040;overflow:hidden"></div><div class="r" style="left:816px;top:1137px;width:2120px;height:81px;background:#353a55;"></div><div class="r" style="left:816px;top:1218px;width:2120px;height:90px;background:#31354f;"></div><div class="r" style="left:816px;top:1308px;width:2120px;height:81px;background:#353a55;"></div><div class="r" style="left:816px;top:1389px;width:2120px;height:88px;background:#31354f;"></div><div class="r" style="left:816px;top:1477px;width:2120px;height:42px;background:#353a55;"></div><div class="r" style="left:816px;top:1136px;width:2120px;height:2px;background:#2c3049;"></div><div class="r" style="left:816px;top:1217px;width:2120px;height:2px;background:#2c3049;"></div><div class="r" style="left:816px;top:1307px;width:2120px;height:2px;background:#2c3049;"></div><div class="r" style="left:816px;top:1388px;width:2120px;height:2px;background:#2c3049;"></div><div class="r" style="left:816px;top:1476px;width:2120px;height:2px;background:#2c3049;"></div><div class="t" style="left:830.0px;top:1084.6px;font-size:34.35px;line-height:34.35px;color:#f3f5fb;font-family:'Liberation Sans', sans-serif;">users</div><div class="t" style="left:830.0px;top:1162.6px;font-size:34.35px;line-height:34.35px;color:#f3f5fb;font-family:'Liberation Sans', sans-serif;">1</div><div class="r" style="left:2936px;top:1137px;width:32px;height:382px;background:#303031;"></div><div class="r" style="left:2944px;top:1139px;width:16px;height:67px;border-radius:8px;background:#858588"></div><div class="r" style="left:816px;top:1519px;width:2150px;height:2px;background:#2b2f47;"></div><div class="r" style="left:825px;top:1528px;width:608px;height:77px;border-radius:5px;background:#383c58"></div><div class="t" style="left:1061.0px;top:1550.7px;font-size:34.44px;line-height:34.44px;color:#a4a9c4;font-family:'Liberation Sans', sans-serif;">Previous</div><div class="t" style="left:1519.0px;top:1555.9px;font-size:31.9px;line-height:31.9px;color:#f3f5fb;font-family:'Liberation Sans', sans-serif;">Page</div><div class="r" style="left:1605px;top:1529px;width:182px;height:81px;border-radius:6px;background:#373b57;box-shadow:inset 0 0 0 2px #2a2e45"></div><div class="t" style="left:1663.0px;top:1554.1px;font-size:34px;line-height:34px;color:#f3f5fb;font-family:'Liberation Sans', sans-serif;">1</div><div class="r" style="left:1723px;top:1547px;width:47px;height:46px;background:#ebebf0"></div><svg class="r" style="left:1733px;top:1550px" width="26" height="40" viewBox="0 0 26 40"><path d="M5 13 L13 5 L21 13 M5 27 L13 35 L21 27" stroke="#8d8d96" stroke-width="2.4" fill="none"/></svg><div class="t" style="left:1796.0px;top:1554.0px;font-size:34.17px;line-height:34.17px;color:#f3f5fb;font-family:'Liberation Sans', sans-serif;">of 1</div><div class="r" style="left:2027px;top:1529px;width:237px;height:81px;border-radius:6px;background:#373b57;box-shadow:inset 0 0 0 2px #2a2e45"></div><div class="t" style="left:2056.0px;top:1552.9px;font-size:35.4px;line-height:35.4px;color:#f3f5fb;font-family:'Liberation Sans', sans-serif;">20 rows</div><svg class="r" style="left:2211px;top:1557px" width="26" height="36" viewBox="0 0 26 36"><path d="M13 2 L23 14 H3 Z M13 34 L23 22 H3 Z" fill="#a9aecb"/></svg><div class="r" style="left:2349px;top:1528px;width:609px;height:77px;border-radius:5px;background:#383c58"></div><div class="t" style="left:2615.0px;top:1550.4px;font-size:36px;line-height:36px;color:#a4a9c4;font-family:'Liberation Sans', sans-serif;">Next</div></div>
</body></html>
